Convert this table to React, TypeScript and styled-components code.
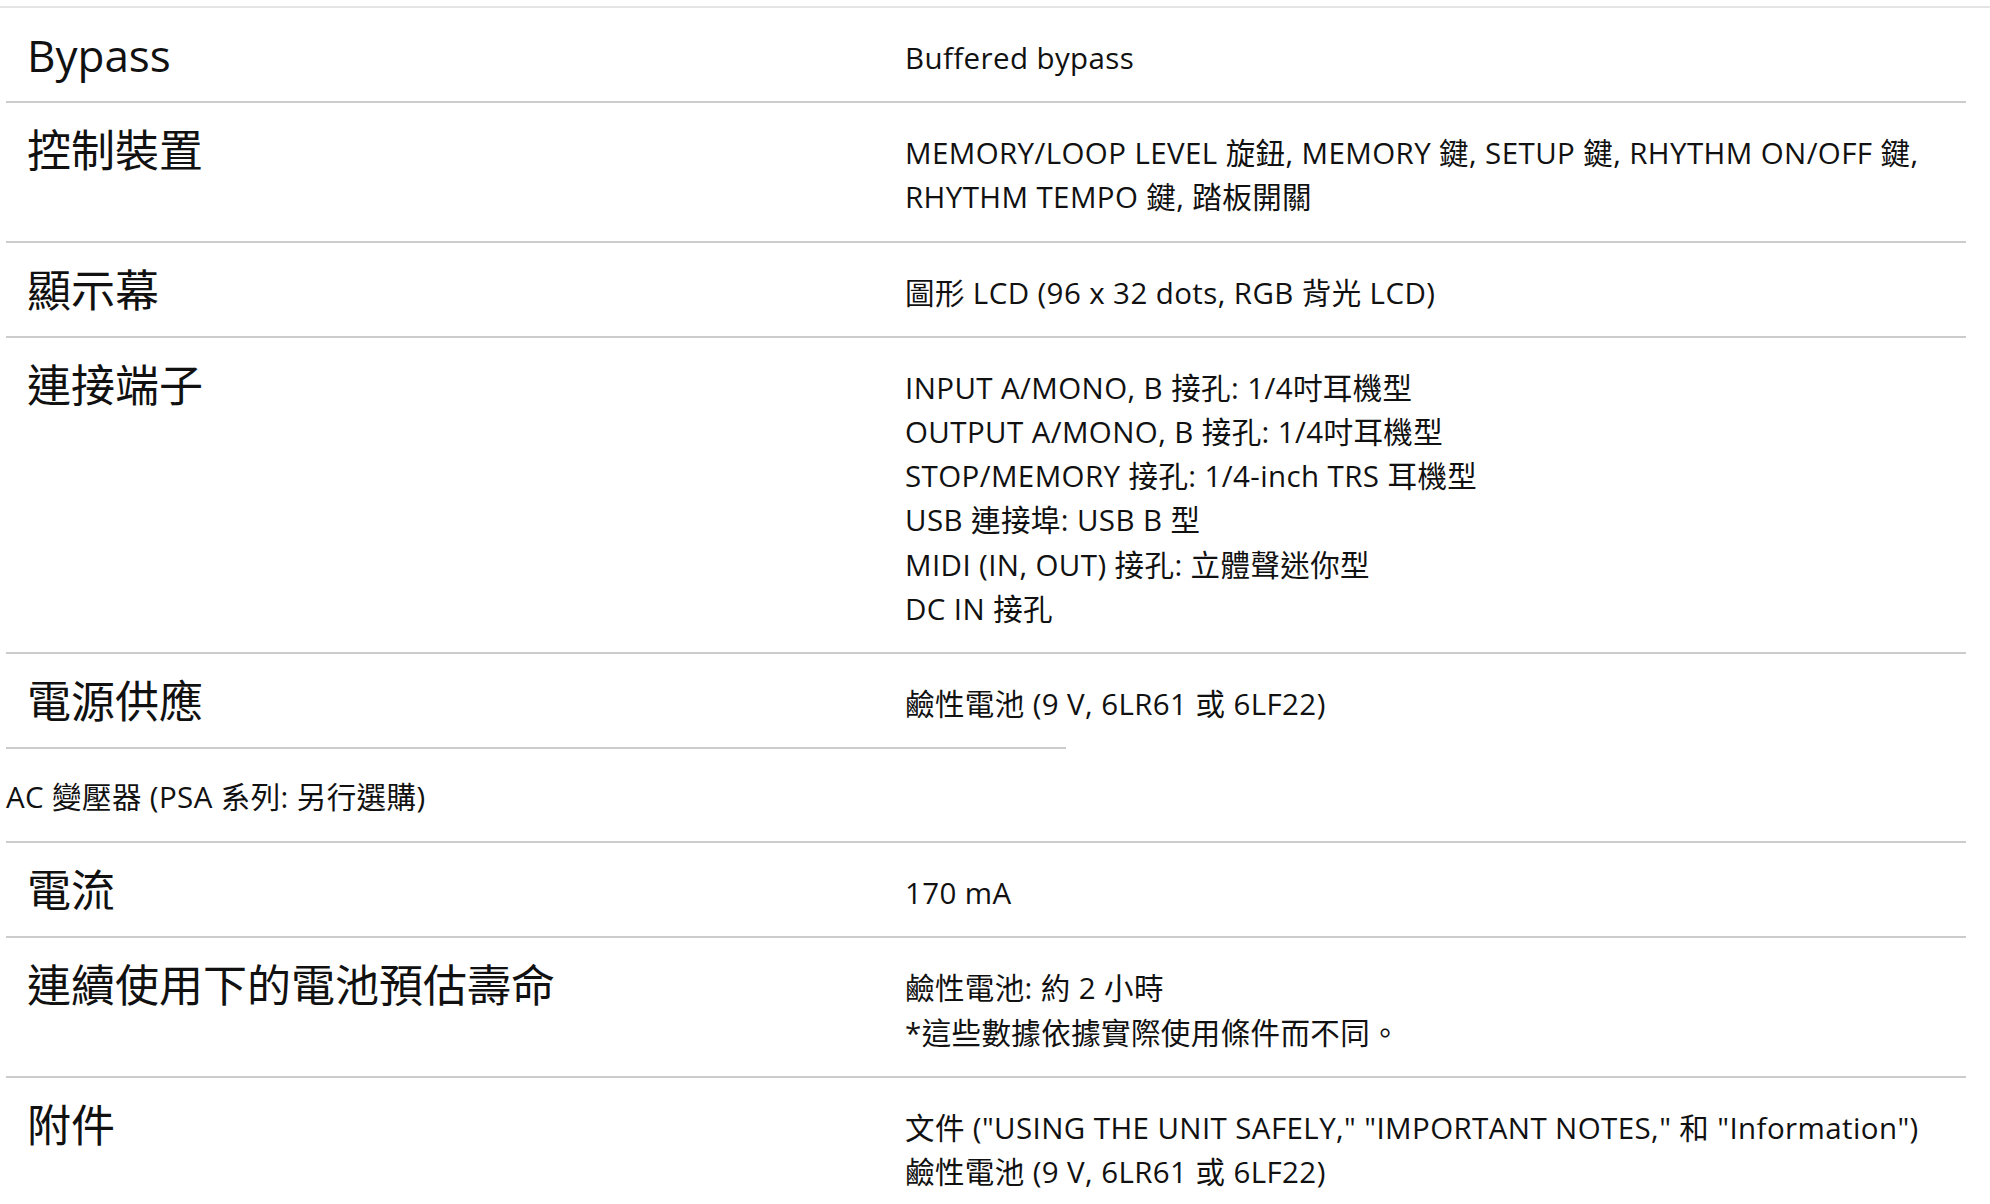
import React from "react";
import styled, { createGlobalStyle } from "styled-components";

const GlobalStyle = createGlobalStyle`
  html, body {
    margin: 0;
    padding: 0;
    background: #ffffff;
  }
  body {
    font-family: "Open Sans", "Noto Sans CJK TC", sans-serif;
    color: #111111;
  }
`;

const Page = styled.div`
  width: 1990px;
  min-height: 1204px;
  overflow: hidden;
`;

const TopRule = styled.div`
  margin-top: 6px;
  height: 2px;
  background: #e4e4e4;
`;

const SpecList = styled.div`
  margin-left: 6px;
  width: 1960px;
`;

const Row = styled.div<{ $noBorder?: boolean }>`
  display: grid;
  grid-template-columns: 899px 1fr;
  align-items: start;
  padding: 25px 0 21px;
  border-bottom: ${(p) => (p.$noBorder ? "none" : "2px solid #cccccc")};
`;

const Label = styled.div`
  padding-left: 21px;
  font-size: 44px;
  line-height: 44px;
  font-weight: 400;
  white-space: nowrap;
`;

const Value = styled.div`
  padding-top: 3px;
  font-size: 29.5px;
  letter-spacing: 0.4px;
  line-height: 44.2px;
  white-space: nowrap;
`;

const PartialRule = styled.div`
  width: 1060px;
  height: 2px;
  background: #cccccc;
`;

const Loose = styled.div`
  padding: 26px 0 22px;
  font-size: 29.5px;
  letter-spacing: 0.4px;
  line-height: 44px;
  border-bottom: 2px solid #cccccc;
`;

type Spec = { label: string; lines: string[]; noBorder?: boolean };

const specs: Spec[] = [
  { label: "Bypass", lines: ["Buffered bypass"] },
  {
    label: "控制裝置",
    lines: [
      "MEMORY/LOOP LEVEL 旋鈕, MEMORY 鍵, SETUP 鍵, RHYTHM ON/OFF 鍵,",
      "RHYTHM TEMPO 鍵, 踏板開關",
    ],
  },
  { label: "顯示幕", lines: ["圖形 LCD (96 x 32 dots, RGB 背光 LCD)"] },
  {
    label: "連接端子",
    lines: [
      "INPUT A/MONO, B 接孔: 1/4吋耳機型",
      "OUTPUT A/MONO, B 接孔: 1/4吋耳機型",
      "STOP/MEMORY 接孔: 1/4-inch TRS 耳機型",
      "USB 連接埠: USB B 型",
      "MIDI (IN, OUT) 接孔: 立體聲迷你型",
      "DC IN 接孔",
    ],
  },
  { label: "電源供應", lines: ["鹼性電池 (9 V, 6LR61 或 6LF22)"], noBorder: true },
];

const specs2: Spec[] = [
  { label: "電流", lines: ["170 mA"] },
  {
    label: "連續使用下的電池預估壽命",
    lines: ["鹼性電池: 約 2 小時", "*這些數據依據實際使用條件而不同。"],
  },
  {
    label: "附件",
    lines: [
      '文件 ("USING THE UNIT SAFELY," "IMPORTANT NOTES," 和 "Information")',
      "鹼性電池 (9 V, 6LR61 或 6LF22)",
    ],
  },
];

const SpecRow = ({ spec }: { spec: Spec }) => (
  <Row $noBorder={spec.noBorder}>
    <Label>{spec.label}</Label>
    <Value>
      {spec.lines.map((l, i) => (
        <React.Fragment key={i}>
          {i > 0 && <br />}
          {l}
        </React.Fragment>
      ))}
    </Value>
  </Row>
);

export default function App() {
  return (
    <Page>
      <GlobalStyle />
      <TopRule />
      <SpecList>
        {specs.map((s) => (
          <SpecRow key={s.label} spec={s} />
        ))}
        <PartialRule />
        <Loose>AC 變壓器 (PSA 系列: 另行選購)</Loose>
        {specs2.map((s) => (
          <SpecRow key={s.label} spec={s} />
        ))}
      </SpecList>
    </Page>
  );
}
